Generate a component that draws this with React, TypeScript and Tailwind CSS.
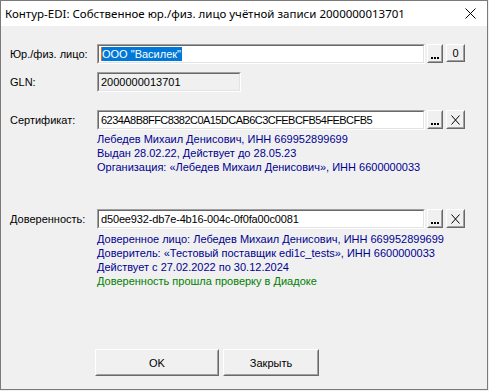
import React from "react";

const Sunken = ({ children, white = true, className = "" }: { children?: React.ReactNode; white?: boolean; className?: string }) => (
  <div className={`border border-t-[#a0a0a0] border-l-[#a0a0a0] border-b-white border-r-white ${className}`}>
    <div className={`h-full border border-t-[#696969] border-l-[#696969] border-b-[#e3e3e3] border-r-[#e3e3e3] ${white ? "bg-white" : "bg-[#f0f0f0]"} flex items-center pl-[2px] overflow-hidden whitespace-nowrap`}>
      {children}
    </div>
  </div>
);

const Raised = ({ children, className = "", inner = "" }: { children?: React.ReactNode; className?: string; inner?: string }) => (
  <div className={`border border-t-white border-l-white border-b-[#696969] border-r-[#696969] ${className}`}>
    <div className={`h-full border border-t-[#f0f0f0] border-l-[#f0f0f0] border-b-[#a0a0a0] border-r-[#a0a0a0] bg-[#f0f0f0] flex items-center justify-center ${inner}`}>
      {children}
    </div>
  </div>
);

const Dots = () => (
  <Raised className="w-[16px] h-[19px] ml-[2px]" inner="items-end pb-[2px]">
    <svg width="8" height="2" viewBox="0 0 8 2">
      <rect x="0" y="0" width="2" height="2" fill="#000" />
      <rect x="3" y="0" width="2" height="2" fill="#000" />
      <rect x="6" y="0" width="2" height="2" fill="#000" />
    </svg>
  </Raised>
);

const XBtn = () => (
  <Raised className="w-[19px] h-[19px] ml-[3px]">
    <svg width="9" height="10" viewBox="0 0 9 10">
      <path d="M0.5 0.5 L8.5 9.5 M8.5 0.5 L0.5 9.5" stroke="#000" strokeWidth="1" fill="none" />
    </svg>
  </Raised>
);

export default function App() {
  return (
    <div
      className="w-[489px] h-[391px] bg-[#f0f0f0] text-black relative overflow-hidden"
      style={{ fontFamily: '"Liberation Sans", Arial, sans-serif' }}
    >
      <div className="w-[488px] h-[390px] border-l border-t border-r border-b border-[#7a7a7a] flex flex-col">
        {/* Title bar */}
        <div className="h-[25px] bg-white flex items-center justify-between pl-[4px] pr-[11px] shrink-0">
          <span className="text-[11.5px] text-black" style={{ fontFamily: '"Noto Sans", "Liberation Sans", sans-serif' }}>
            Контур-EDI: Собственное юр./физ. лицо учётной записи 2000000013701
          </span>
          <svg width="11" height="11" viewBox="0 0 11 11">
            <path d="M0.5 0.5 L10.5 10.5 M10.5 0.5 L0.5 10.5" stroke="#000" strokeWidth="1" fill="none" />
          </svg>
        </div>

        <div className="flex flex-col pl-[9px] text-[11px] leading-[14px]">
          {/* Row 1 */}
          <div className="flex items-start mt-[18px]">
            <div className="w-[87px] h-[20px] flex items-center">Юр./физ. лицо:</div>
            <Sunken className="w-[328px] h-[20px]">
              <span className="w-[1px] h-[14px] bg-[#f7630c]" />
              <span className="bg-[#0078d7] text-white leading-[14px] pr-[1px]">ООО "Василек"</span>
            </Sunken>
            <Dots />
            <Raised className="w-[19px] h-[18px] ml-[3px]">0</Raised>
          </div>

          {/* GLN */}
          <div className="flex items-start mt-[8px]">
            <div className="w-[87px] h-[20px] flex items-center">GLN:</div>
            <Sunken white={false} className="w-[144px] h-[20px]">
              2000000013701
            </Sunken>
          </div>

          {/* Cert */}
          <div className="flex items-start mt-[18px]">
            <div className="w-[87px] h-[20px] flex items-center">Сертификат:</div>
            <Sunken className="w-[328px] h-[20px]">
              <span className="tracking-[-0.55px]">6234A8B8FFC8382C0A15DCAB6C3CFEBCFB54FEBCFB5</span>
            </Sunken>
            <Dots />
            <XBtn />
          </div>
          <div className="pl-[87px] mt-[2px] text-[#000090]">
            <div>Лебедев Михаил Денисович, ИНН 669952899699</div>
            <div>Выдан 28.02.22, Действует до 28.05.23</div>
            <div>Организация: «Лебедев Михаил Денисович», ИНН 6600000033</div>
          </div>

          {/* Dov */}
          <div className="flex items-start mt-[35px]">
            <div className="w-[87px] h-[20px] flex items-center">Доверенность:</div>
            <Sunken className="w-[328px] h-[20px]">
              <span className="tracking-[-0.15px]">d50ee932-db7e-4b16-004c-0f0fa00c0081</span>
            </Sunken>
            <Dots />
            <XBtn />
          </div>
          <div className="pl-[87px] mt-[3px] text-[#000090]">
            <div>Доверенное лицо: Лебедев Михаил Денисович, ИНН 669952899699</div>
            <div>Доверитель: «Тестовый поставщик edi1c_tests», ИНН 6600000033</div>
            <div>Действует с 27.02.2022 по 30.12.2024</div>
            <div className="text-[#008000]">Доверенность прошла проверку в Диадоке</div>
          </div>

          {/* Buttons */}
          <div className="flex mt-[61px] pl-[85px]">
            <Raised className="w-[124px] h-[27px]">OK</Raised>
            <Raised className="w-[96px] h-[27px] ml-[4px]">Закрыть</Raised>
          </div>
        </div>
      </div>
    </div>
  );
}
